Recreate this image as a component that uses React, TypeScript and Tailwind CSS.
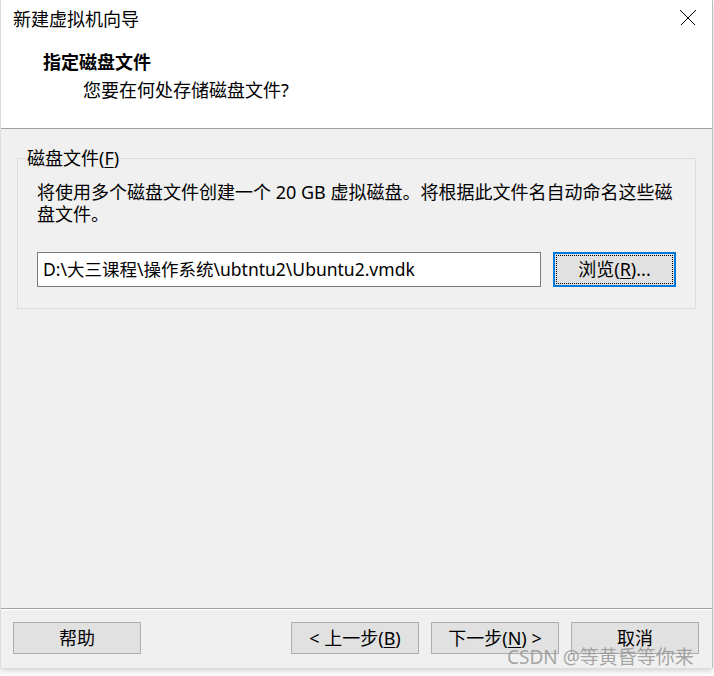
import React from "react";

const font = "font-['Noto_Sans','Noto_Sans_CJK_SC',sans-serif]";

function WizardButton({ children, className = "" }: { children: React.ReactNode; className?: string }) {
  return (
    <button
      className={`w-[128px] h-[32px] border border-[#adadad] bg-[#e1e1e1] text-[18px] leading-[24px] text-black flex items-center justify-center ${className}`}
    >
      {children}
    </button>
  );
}

export default function App() {
  return (
    <div className={`w-[714px] h-[676px] bg-white overflow-hidden relative ${font}`}>
      <div className="w-[713px] h-[668px] flex flex-col border-l border-r border-l-[#dcdcdc] border-r-[#bdbdbd] bg-[#f0f0f0] shadow-[0_3px_6px_rgba(0,0,0,0.18)]">
        {/* 页头 */}
        <div className="h-[129px] bg-white border-b border-[#a0a0a0] pl-[12px] pr-[16px] pt-[7px] flex flex-col">
          <div className="flex items-start justify-between">
            <span className="text-[18px] leading-[24px] text-black">新建虚拟机向导</span>
            <svg width="16" height="16" viewBox="0 0 16 16" className="mt-[3px]" shapeRendering="crispEdges">
              <path d="M0.5 0.5 L15.5 15.5 M15.5 0.5 L0.5 15.5" stroke="#000" strokeWidth="1" />
            </svg>
          </div>
          <div className="mt-[19px] pl-[30px] text-[18px] leading-[24px] font-bold text-black">指定磁盘文件</div>
          <div className="mt-[4px] pl-[70px] text-[18px] leading-[24px] text-black">您要在何处存储磁盘文件?</div>
        </div>

        {/* 内容 */}
        <div className="flex-1 px-[16px] pt-[17px]">
          <fieldset className="border border-[#dcdcdc] p-0">
            <legend className="ml-[7px] px-[2px] text-[18px] leading-[24px] text-black">
              磁盘文件(<span className="underline underline-offset-2">F</span>)
            </legend>
            <div className="pl-[19px] pr-[18px] pb-[21px]">
              <p className="mt-[11px] text-[18px] leading-[22px] text-black whitespace-nowrap">
                将使用多个磁盘文件创建一个 20 GB 虚拟磁盘。将根据此文件名自动命名这些磁
                <br />
                盘文件。
              </p>
              <div className="mt-[27px] flex items-center gap-[12px]">
                <div className="w-[504px] h-[35px] border border-[#7a7a7a] bg-white pl-[5px] flex items-center text-[17.5px] text-black whitespace-nowrap">
                  D:\大三课程\操作系统\ubtntu2\Ubuntu2.vmdk
                </div>
                <button className="w-[123px] h-[35px] border-2 border-[#0078d7] bg-[#e1e1e1] p-[1px]">
                  <span className="w-full h-full border border-dotted border-black flex items-center justify-center text-[18px] text-black">
                    浏览(<span className="underline underline-offset-2">R</span>)...
                  </span>
                </button>
              </div>
            </div>
          </fieldset>
        </div>

        {/* 页脚 */}
        <div className="border-t border-[#a0a0a0]">
          <div className="border-t border-white pt-[12px] pb-[14px] pl-[12px] pr-[13px] flex items-center">
            <WizardButton>帮助</WizardButton>
            <div className="flex-1" />
            <WizardButton className="w-[127px]">
              &lt; 上一步(<span className="underline underline-offset-2">B</span>)
            </WizardButton>
            <WizardButton className="ml-[12px]">
              下一步(<span className="underline underline-offset-2">N</span>) &gt;
            </WizardButton>
            <WizardButton className="ml-[12px]">取消</WizardButton>
          </div>
        </div>
      </div>

      {/* 水印 */}
      <div className="absolute left-[507px] top-[645px] text-[19px] leading-[24px] text-[rgba(150,150,150,0.85)] whitespace-nowrap pointer-events-none">
        CSDN @等黄昏等你来
      </div>
    </div>
  );
}
